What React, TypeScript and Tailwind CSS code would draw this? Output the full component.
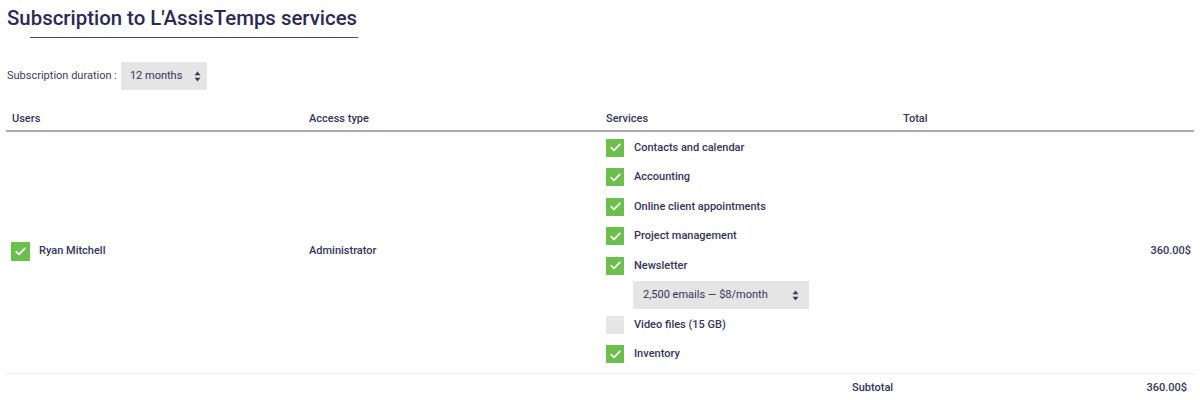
import React from "react"

const services = [
  { name: "Contacts and calendar", on: true },
  { name: "Accounting", on: true },
  { name: "Online client appointments", on: true },
  { name: "Project management", on: true },
  { name: "Newsletter", on: true, select: "2,500 emails — $8/month" },
  { name: "Video files (15 GB)", on: false },
  { name: "Inventory", on: true },
]

const Check = () => (
  <svg width="11" height="9" viewBox="0 0 11 9" fill="none">
    <path d="M1.2 4.6 L4 7.3 L9.8 1.4" stroke="white" strokeWidth="1.7" strokeLinecap="round" strokeLinejoin="round" />
  </svg>
)

const Box = ({ on }: { on: boolean }) => (
  <div className={"w-[18px] h-[18px] shrink-0 flex items-center justify-center " + (on ? "bg-[#6cbf4c]" : "bg-[#e6e6e6]")}>
    {on && <Check />}
  </div>
)

const Arrows = () => (
  <svg width="7" height="11" viewBox="0 0 7 11">
    <path d="M3.5 0.5 L6.5 4.3 L0.5 4.3 Z" fill="#3a3a5c" />
    <path d="M3.5 10.5 L6.5 6.7 L0.5 6.7 Z" fill="#3a3a5c" />
  </svg>
)

export default function App() {
  return (
    <div className="w-[1200px] h-[400px] bg-white overflow-hidden text-[#35355a]" style={{ fontFamily: "Roboto, 'Liberation Sans', sans-serif" }}>
      <div className="pl-[7px] pt-[5px]">
        <h1 className="text-[20.4px] leading-[26px] font-medium text-[#2c2a55]">Subscription to L'AssisTemps services</h1>
        <div className="ml-[23px] w-[328px] h-px bg-[#4a4a60] mt-[6px]" />
      </div>

      <div className="flex items-center pl-[7px] mt-[24px] text-[11px]">
        <span className="text-[#3e3e5a]">Subscription duration :</span>
        <div className="ml-[4px] w-[86px] h-[28px] bg-[#e5e5e5] flex items-center justify-between pl-[9px] pr-[6px] text-[#33335a]">
          <span>12 months</span>
          <Arrows />
        </div>
      </div>

      <div className="mx-[6px] mt-[19px]">
        <div className="grid grid-cols-[297px_297px_297px_1fr] h-[19px] items-center pt-[1px] text-[11px] font-medium text-[#35355a]">
          <div className="pl-[6px]">Users</div>
          <div className="pl-[6px]">Access type</div>
          <div className="pl-[6px]">Services</div>
          <div className="pl-[6px]">Total</div>
        </div>
        <div className="h-[2px] bg-[#a9a9b2] mt-[2px]" />

        <div className="grid grid-cols-[297px_297px_297px_1fr] items-center text-[11px] font-medium border-b border-[#ececef]">
          <div className="pl-[5px] flex items-center mb-[3px]">
            <div className="w-[19px] h-[19px] bg-[#6cbf4c] flex items-center justify-center">
              <Check />
            </div>
            <span className="ml-[9px]">Ryan Mitchell</span>
          </div>
          <div className="pl-[6px] mb-[3px]">Administrator</div>
          <div className="pl-[6px] pt-[1px] pb-[4px]">
            {services.map((s) => (
              <React.Fragment key={s.name}>
                <div className="h-[29.5px] flex items-center">
                  <Box on={s.on} />
                  <span className="ml-[10px]">{s.name}</span>
                </div>
                {s.select && (
                  <div className="h-[29.5px] flex items-center pl-[27px]">
                    <div className="w-[176px] h-[28px] bg-[#e5e5e5] flex items-center justify-between pl-[10px] pr-[10px] font-normal text-[#33335a]">
                      <span>{s.select}</span>
                      <Arrows />
                    </div>
                  </div>
                )}
              </React.Fragment>
            ))}
          </div>
          <div className="text-right pr-[3px] mb-[3px]">360.00$</div>
        </div>

        <div className="grid grid-cols-[846px_1fr] h-[29px] items-center text-[11px] font-medium">
          <div />
          <div className="flex justify-between pr-[7px]">
            <span>Subtotal</span>
            <span>360.00$</span>
          </div>
        </div>
      </div>
    </div>
  )
}
